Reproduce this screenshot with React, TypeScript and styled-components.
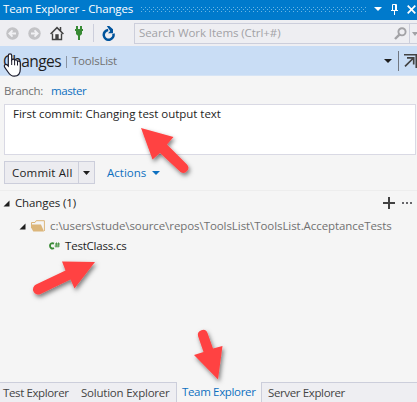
import React from 'react';
import styled, { createGlobalStyle } from 'styled-components';

const Global = createGlobalStyle`
  body { margin: 0; background: #f5f5f5; overflow: hidden; }
  * { box-sizing: border-box; }
`;

const Window = styled.div`
  position: relative;
  width: 417px;
  height: 402px;
  display: flex;
  flex-direction: column;
  overflow: hidden;
  background: #f5f5f5;
  color: #1e1e1e;
  font: 11.5px/16px 'Open Sans', 'Noto Sans', sans-serif;
  svg { display: block; flex: none; }
`;

const Text = styled.span<{ $track?: number; $color?: string; $size?: number }>`
  white-space: pre;
  flex: none;
  letter-spacing: ${p => p.$track ?? 0}px;
  color: ${p => p.$color ?? 'inherit'};
  font-size: ${p => p.$size ?? 11.5}px;
`;

const TitleBar = styled.header`
  flex: none;
  height: 20px;
  display: flex;
  align-items: center;
  padding: 0 1px 2px 3px;
  background: #007acc;
  color: #fff;
`;

const Grip = styled.div`
  flex: 1;
  height: 5px;
  min-width: 0;
  margin: 1px 8px 0 8px;
  overflow: hidden;
`;

const Toolbar = styled.div`
  flex: none;
  height: 26px;
  display: flex;
  align-items: center;
  padding-left: 6px;
  background: #eeeef2;
`;

const ToolIcon = styled.span<{ $w: number; $gap: number }>`
  flex: none;
  width: ${p => p.$w}px;
  margin-right: ${p => p.$gap}px;
`;

const Divider = styled.span`
  width: 1px;
  height: 18px;
  margin-right: 8px;
  background: #cccedb;
`;

const SearchBox = styled.div`
  flex: 1;
  height: 21px;
  display: flex;
  align-items: center;
  padding-left: 4px;
  border: 1px solid #cccedb;
  border-right: 0;
`;

const SearchButton = styled.span`
  margin-left: auto;
  padding-right: 2px;
`;

const SearchMenu = styled.span`
  width: 8px;
  height: 19px;
  padding: 8px 0 0 2px;
  border-left: 1px solid #cccedb;
  overflow: hidden;
`;

const PageHeader = styled.div`
  flex: none;
  height: 30px;
  display: flex;
  align-items: center;
  padding-left: 3px;
  background: #c9ddf5;
  border-bottom: 1px solid #d6e4f5;
`;

const HeaderRule = styled.span<{ $h: number; $margin: string; $color: string }>`
  width: 1px;
  height: ${p => p.$h}px;
  margin: ${p => p.$margin};
  background: ${p => p.$color};
`;

const HeaderActions = styled.div`
  display: flex;
  align-items: center;
  margin-left: auto;
`;

const BranchRow = styled.div`
  flex: none;
  height: 28px;
  display: flex;
  align-items: center;
  gap: 8px;
  padding: 2px 0 0 4px;
`;

const Message = styled.div`
  flex: none;
  height: 51px;
  margin: 0 1px 0 4px;
  padding: 1px 8px;
  border: 1px solid #d9d9e4;
  background: #fff;
`;

const CommitRow = styled.div`
  flex: none;
  height: 36px;
  display: flex;
  align-items: center;
  gap: 12px;
  padding: 0 0 0 4px;
  border-bottom: 1px solid #ededed;
`;

const SplitButton = styled.div`
  width: 91px;
  height: 23px;
  display: flex;
  align-items: center;
  border: 1px solid #cccedb;
  background: #ececf0;
`;

const CommitLabel = styled.span`
  width: 74px;
  height: 21px;
  display: flex;
  align-items: center;
  padding: 0 0 0 7px;
  border-right: 1px solid #cccedb;
`;

const DropArrow = styled.span`
  padding-left: 4px;
`;

const ActionsLink = styled.span`
  display: flex;
  align-items: center;
  gap: 6px;
`;

const TreeRow = styled.div<{ $indent: number; $h: number; $gap: number }>`
  flex: none;
  height: ${p => p.$h}px;
  display: flex;
  align-items: center;
  gap: ${p => p.$gap}px;
  padding-left: ${p => p.$indent}px;
`;

const RowActions = styled.span`
  display: flex;
  align-items: center;
  gap: 7px;
  margin: 0 5px 0 auto;
`;

const Tabs = styled.nav`
  flex: none;
  display: flex;
  height: 20px;
  margin-top: auto;
`;

const Tab = styled.div<{ $w?: number; $pad: number; $active?: boolean }>`
  flex: ${p => (p.$w ? `0 0 ${p.$w}px` : '1')};
  padding: ${p => (p.$active ? 1 : 2)}px 0 0 ${p => p.$pad}px;
  border-top: 1px solid ${p => (p.$active ? 'transparent' : '#cccedb')};
  border-right: ${p => (p.$w && !p.$active ? '1px solid #cccedb' : '0')};
  border-left: ${p => (p.$w || p.$active ? '0' : '1px solid #cccedb')};
  background: ${p => (p.$active ? '#f5f5f5' : '#eeeef2')};
  color: ${p => (p.$active ? '#0e70c0' : '#444')};
  line-height: 16px;
`;

const JoinedTab = styled(Tab)`
  border-right: 0;
`;

const Annotations = styled.svg`
  position: absolute;
  inset: 0;
  pointer-events: none;
`;

const Caret = ({ color, w = 7 }: { color: string; w?: number }) => (
  <svg width={w} height="4" viewBox="0 0 8 4" preserveAspectRatio="none">
    <path d="M0 0H8L4 4Z" fill={color} />
  </svg>
);

const GripDots = () => (
  <svg width="226" height="5" viewBox="0 0 226 5">
    <path
      d="M0 .5H226M0 4.5H226M2 2.5H226"
      stroke="#6cb6e6" strokeDasharray="1 3" shapeRendering="crispEdges"
    />
  </svg>
);

const Expander = () => (
  <svg width="7" height="7" viewBox="0 0 7 7"><path d="M6.5 .5V6.5H.5Z" fill="#1e1e1e" /></svg>
);

const NavArrow = ({ forward }: { forward?: boolean }) => (
  <svg width="13" height="13" viewBox="0 0 13 13">
    <circle cx="6.5" cy="6.5" r="6.2" fill="#c3c3c6" />
    <path
      d={forward ? 'M3 6.5H9.3M6.5 3.3L9.7 6.5L6.5 9.7' : 'M10 6.5H3.7M6.5 3.3L3.3 6.5L6.5 9.7'}
      fill="none" stroke="#f1f1f4" strokeWidth="1.8"
    />
  </svg>
);

const Home = () => (
  <svg width="14" height="15" viewBox="0 0 14 15">
    <path d="M2.5 7.5V13.5H11.5V7.5" fill="#f5f5f7" stroke="#424242" strokeWidth="1.4" />
    <path d="M.6 8L7 1.6L13.4 8M10.5 1V5" fill="none" stroke="#424242" strokeWidth="1.5" />
    <path d="M5.3 8.2H8.7V14H5.3Z" fill="#424242" />
  </svg>
);

const Plug = () => (
  <svg width="8" height="14" viewBox="0 0 8 14">
    <path d="M1 0H3V3H5V0H7V3H8V5H7V8L5.5 9.5H5V14H3V9.5H2.5L1 8V5H0V3H1Z" fill="#388a34" />
  </svg>
);

const Refresh = () => (
  <svg width="13" height="15" viewBox="0 0 13 15">
    <path d="M11.4 7.6A4.9 4.9 0 1 1 6.2 4" fill="none" stroke="#00539c" strokeWidth="2.5" />
    <path d="M4.8 0H7.3L11 3.2V7.2H6L8.2 5Z" fill="#00539c" />
  </svg>
);

const Magnifier = () => (
  <svg width="13" height="13" viewBox="0 0 13 13">
    <circle cx="8" cy="4.8" r="3.6" fill="none" stroke="#a2a2a6" strokeWidth="1.9" />
    <path d="M5.4 7.6L1 12" stroke="#a2a2a6" strokeWidth="2.4" />
  </svg>
);

const Pin = () => (
  <svg width="7" height="11" viewBox="0 0 7 11">
    <path d="M1.5 6.5V.5H5.5V6.5M0 6.5H7M3.5 6.5V11M4.5 1V6" fill="none" stroke="#fff" />
  </svg>
);

const Close = () => (
  <svg width="9" height="9" viewBox="0 0 9 9">
    <path d="M.7 .7L8.3 8.3M8.3 .7L.7 8.3" stroke="#fff" strokeWidth="1.7" />
  </svg>
);

const Undock = () => (
  <svg width="13" height="14" viewBox="0 0 13 14">
    <path d="M0 .7H12.3V14M1 12.3L9.5 4M3 3.8H9.7V10.5" fill="none" stroke="#424242" strokeWidth="1.7" />
  </svg>
);

const Folder = () => (
  <svg width="14" height="12" viewBox="0 0 14 12">
    <path d="M.5 5V2.5H4L5.2 .7H13.4V11" fill="none" stroke="#dcb67a" />
    <path d="M0 4.5H10L13 11.5H2.3L0 7.5Z" fill="#dcb67a" />
  </svg>
);

const CSharp = () => (
  <svg width="11" height="8" viewBox="0 0 11 8">
    <path d="M5 1.6C2.8 .5 1 1.8 1 3.8S2.8 7.1 5 6.1" fill="none" stroke="#388a34" strokeWidth="1.9" />
    <path d="M7.5 .5L7 5.5M9.5 .5L9 5.5M6 2H11M5.7 4H10.7" stroke="#388a34" strokeWidth=".9" />
  </svg>
);

const Plus = () => (
  <svg width="12" height="12" viewBox="0 0 12 12"><path d="M6 0V12M0 6H12" stroke="#424242" strokeWidth="2" /></svg>
);

const Dots = () => (
  <svg width="10" height="2" viewBox="0 0 10 2"><path d="M0 0H2V2H0ZM4 0H6V2H4ZM8 0H10V2H8Z" fill="#66666a" /></svg>
);

const arrows = [
  'M141 128L173.5 137L167 144.5L187 164.5A5 5 0 0 1 180.5 172L160 153L152.5 159.5Z',
  'M95 262L62 261.5L65.5 270.5L36 284.5A5 5 0 0 0 40.5 294L70.5 279.5L74.5 288.5Z',
  'M218 379.5L222.5 346L213 348.5L207.5 333A5 5 0 0 0 198 336L203.5 352L194 355Z',
];

export default function App() {
  return (
    <>
      <Global />
      <Window>
        <TitleBar>
          <Text $track={-0.15}>Team Explorer - Changes</Text>
          <Grip><GripDots /></Grip>
          <ToolIcon $w={8} $gap={9}><Caret color="#fff" w={8} /></ToolIcon>
          <ToolIcon $w={7} $gap={9}><Pin /></ToolIcon>
          <Close />
        </TitleBar>
        <Toolbar>
          <ToolIcon $w={13} $gap={9}><NavArrow /></ToolIcon>
          <ToolIcon $w={13} $gap={9}><NavArrow forward /></ToolIcon>
          <ToolIcon $w={14} $gap={11}><Home /></ToolIcon>
          <ToolIcon $w={8} $gap={10}><Plug /></ToolIcon>
          <Divider />
          <ToolIcon $w={13} $gap={19}><Refresh /></ToolIcon>
          <SearchBox>
            <Text $track={-0.07} $color="#a2a2a6">Search Work Items (Ctrl+#)</Text>
            <SearchButton><Magnifier /></SearchButton>
            <SearchMenu><Caret color="#a2a2a6" w={6} /></SearchMenu>
          </SearchBox>
        </Toolbar>
        <PageHeader>
          <Text $track={-0.56} $size={15.5}>Changes</Text>
          <HeaderRule $h={12} $margin="2px 5px 0" $color="#8a94a3" />
          <Text $track={-0.23} $color="#717171">ToolsList</Text>
          <HeaderActions>
            <Caret color="#1e1e1e" w={8} />
            <HeaderRule $h={20} $margin="0 5px 0 6px" $color="#717780" />
            <Undock />
          </HeaderActions>
        </PageHeader>
        <BranchRow>
          <Text $track={-0.31} $color="#717171">Branch:</Text>
          <Text $track={-0.4} $color="#0e70c0">master</Text>
        </BranchRow>
        <Message><Text $track={-0.03}>First commit: Changing test output text</Text></Message>
        <CommitRow>
          <SplitButton>
            <CommitLabel><Text $track={0.2}>Commit All</Text></CommitLabel>
            <DropArrow><Caret color="#1e1e1e" /></DropArrow>
          </SplitButton>
          <ActionsLink>
            <Text $color="#0e70c0">Actions</Text>
            <Caret color="#0e70c0" w={8} />
          </ActionsLink>
        </CommitRow>
        <TreeRow $indent={3} $h={24} $gap={5}>
          <Expander />
          <Text $track={-0.12}>Changes (1)</Text>
          <RowActions><Plus /><Dots /></RowActions>
        </TreeRow>
        <TreeRow $indent={19} $h={22} $gap={5}>
          <Expander />
          <Folder />
          <Text $track={-0.07} $color="#717171">{'c:\\users\\stude\\source\\repos\\ToolsList\\ToolsList.AcceptanceTests'}</Text>
        </TreeRow>
        <TreeRow $indent={49} $h={17} $gap={5}>
          <CSharp />
          <Text $track={-0.2}>TestClass.cs</Text>
        </TreeRow>
        <Tabs>
          <JoinedTab $w={77} $pad={3}><Text $track={-0.38}>Test Explorer</Text></JoinedTab>
          <Tab $w={100} $pad={4}><Text $track={-0.22}>Solution Explorer</Text></Tab>
          <Tab $w={84} $pad={5} $active><Text $track={-0.34}>Team Explorer</Text></Tab>
          <Tab $pad={6}><Text $track={-0.37}>Server Explorer</Text></Tab>
        </Tabs>
        <Annotations width="417" height="402" viewBox="0 0 417 402">
          <defs>
            <filter id="shadow" x="-30%" y="-30%" width="160%" height="160%">
              <feDropShadow dx="1.5" dy="2.5" stdDeviation="2" floodColor="#000" floodOpacity=".5" />
            </filter>
          </defs>
          {arrows.map(d => <path key={d} d={d} fill="#ff4342" filter="url(#shadow)" />)}
          <path
            d="M8.3 66V55.5C8.3 53.2 11.7 53.2 11.7 55.5V60C12.5 58.7 14.4 59 14.6 60.4C15.5 59.5 17.3 60 17.5 61.4C18.5 60.7 20.3 61.3 20.3 63V69C20.3 73.5 18 76.2 14.2 76.2C10.8 76.2 9.6 74.5 8 72L4.6 67.2C3.4 65 5.8 63.5 7.3 65Z"
            fill="#fff" stroke="#1c1c2c" strokeWidth="1.2"
          />
          <path d="M11.7 60V65M14.6 61V65.3M17.5 62V65.5" stroke="#1c1c2c" />
        </Annotations>
      </Window>
    </>
  );
}
